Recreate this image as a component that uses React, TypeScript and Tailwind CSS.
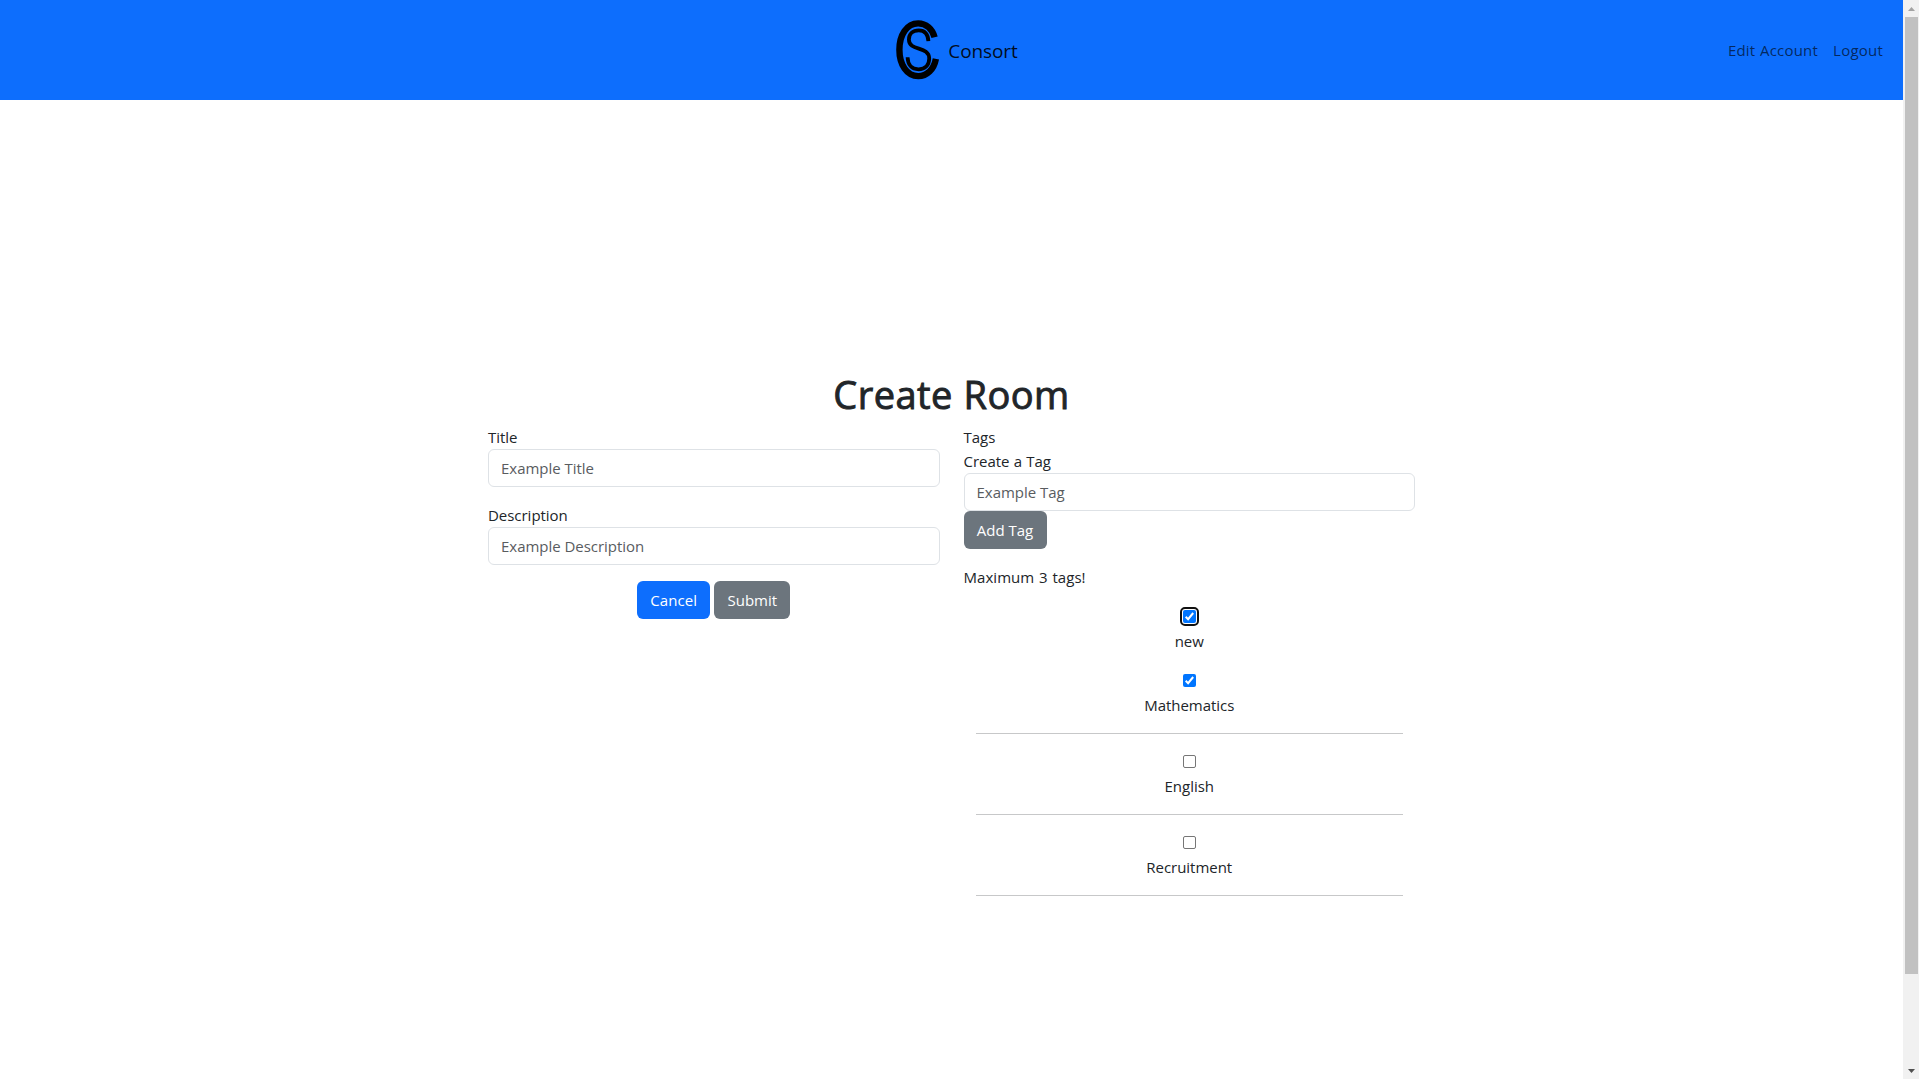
import { useState } from "react";

function Logo() {
  return (
    <svg width="50" height="60" viewBox="0 0 50 60" fill="none" stroke="#000" className="shrink-0">
      <path d="M39.6 17.3C37.4 8.8 31 3.4 23.2 3.4C11.8 3.4 4.4 15 4.4 29.8C4.4 44.6 11.8 56.1 23.2 56.1C32 56.1 38.8 49.6 40.9 38.8" strokeWidth="6.4" />
      <path d="M33.4 21.2C33 14.2 29.6 10.4 23.8 10.4C17.6 10.4 13.9 14.2 13.9 19.4C13.9 31.8 34.2 25.4 34.2 38.6C34.2 45.4 29.8 49.3 23.6 49.3C16.6 49.3 12.8 44.8 12.6 37.2" strokeWidth="3.8" />
    </svg>
  );
}

function Field({ label, placeholder }: { label: string; placeholder: string }) {
  return (
    <label className="block">
      <span className="block h-6">{label}</span>
      <input
        className="block h-[38px] w-full rounded-md border border-[#dee2e6] bg-white px-3 pb-px outline-none placeholder:text-[#595c5f]"
        placeholder={placeholder}
      />
    </label>
  );
}

function Check({ checked, focused, onChange, label }: { checked: boolean; focused?: boolean; onChange: () => void; label: string }) {
  return (
    <button
      type="button"
      role="checkbox"
      aria-label={label}
      aria-checked={checked}
      onClick={onChange}
      className={`flex size-[13px] items-center justify-center rounded-[2px] ${checked ? "bg-[#0075ff]" : "border border-[#767676] bg-white"} ${focused ? "outline-2 outline-offset-1 outline-[#101010]" : ""}`}
    >
      {checked && (
        <svg width="13" height="13" viewBox="0 0 13 13" fill="none" stroke="#fff" strokeWidth="2" className="shrink-0">
          <path d="M2.7 6.8L5.1 9.2L10.2 3" />
        </svg>
      )}
    </button>
  );
}

const tags = [
  { name: "new", checked: true, focused: true, divider: false },
  { name: "Mathematics", checked: true, focused: false, divider: true },
  { name: "English", checked: false, focused: false, divider: true },
  { name: "Recruitment", checked: false, focused: false, divider: true },
];

export default function App() {
  const [selected, setSelected] = useState(tags.map((t) => t.checked));
  const toggle = (i: number) => setSelected((s) => s.map((v, j) => (j === i ? !v : v)));

  return (
    <div className="flex h-[1079px] w-full overflow-hidden bg-white font-['Open_Sans',sans-serif] text-[15px] leading-6 tracking-[-0.03px] [word-spacing:0.4px] text-[#212529]">
      <div className="flex min-w-0 flex-1 flex-col">
        <header className="grid h-[100px] shrink-0 grid-cols-[1fr_auto_1fr] items-center bg-[#0d6efd] pr-5">
          <div />
          <a href="#" className="ml-[30px] flex items-center">
            <Logo />
            <span className="ml-[3px] pt-px text-[19px] leading-[30px] tracking-[-0.1px] text-black/90">Consort</span>
          </a>
          <nav className="flex justify-end gap-[15px] tracking-[0.22px] text-black/65">
            <a href="#">Edit Account</a>
            <a href="#">Logout</a>
          </nav>
        </header>

        <main className="mx-auto mt-[270px] w-[927px]">
          <h1 className="mb-1.5 h-12 text-center text-[38px] leading-[49px] font-normal tracking-[0.45px] [-webkit-text-stroke:0.9px_#212529]">Create Room</h1>
          <div className="grid grid-cols-2 gap-6">
            <section className="pt-[1px]">
              <Field label="Title" placeholder="Example Title" />
              <div className="h-4" />
              <Field label="Description" placeholder="Example Description" />
              <div className="mt-4 flex justify-center gap-1 text-white">
                <button className="h-[38px] w-[73px] rounded-md bg-[#0d6efd] pb-px tracking-[0.1px]">Cancel</button>
                <button className="h-[38px] w-[76px] rounded-md bg-[#6c757d] pb-px">Submit</button>
              </div>
            </section>

            <section className="pt-[1px]">
              <div className="h-6">Tags</div>
              <Field label="Create a Tag" placeholder="Example Tag" />
              <button className="block h-[38px] w-[83px] rounded-md bg-[#6c757d] pb-px text-white">Add Tag</button>
              <p className="mt-4 h-6 tracking-[0.05px] [word-spacing:0.8px]">Maximum 3 tags!</p>
              <div className="mt-[21px] px-3">
                {tags.map((tag, i) => (
                  <div key={tag.name} className="mb-[21px] flex flex-col items-center">
                    <Check label={tag.name} checked={selected[i]} focused={tag.focused} onChange={() => toggle(i)} />
                    <span className="mt-1.5 h-6">{tag.name}</span>
                    {tag.divider && <hr className="mt-4 h-px w-full border-0 bg-[#c7c8c9]" />}
                  </div>
                ))}
              </div>
            </section>
          </div>
        </main>
      </div>

      <div className="flex w-4 shrink-0 flex-col bg-[#f1f1f1]">
        <div className="flex h-[17px] items-center justify-center">
          <svg width="7" height="4" viewBox="0 0 7 4" fill="#a3a3a3"><path d="M0 4L3.5 0L7 4Z" /></svg>
        </div>
        <div className="mr-px ml-0.5 h-[957px] bg-[#c1c1c1]" />
        <div className="mt-auto flex h-[17px] items-center justify-center">
          <svg width="7" height="4" viewBox="0 0 7 4" fill="#505050"><path d="M0 0L3.5 4L7 0Z" /></svg>
        </div>
      </div>
    </div>
  );
}
